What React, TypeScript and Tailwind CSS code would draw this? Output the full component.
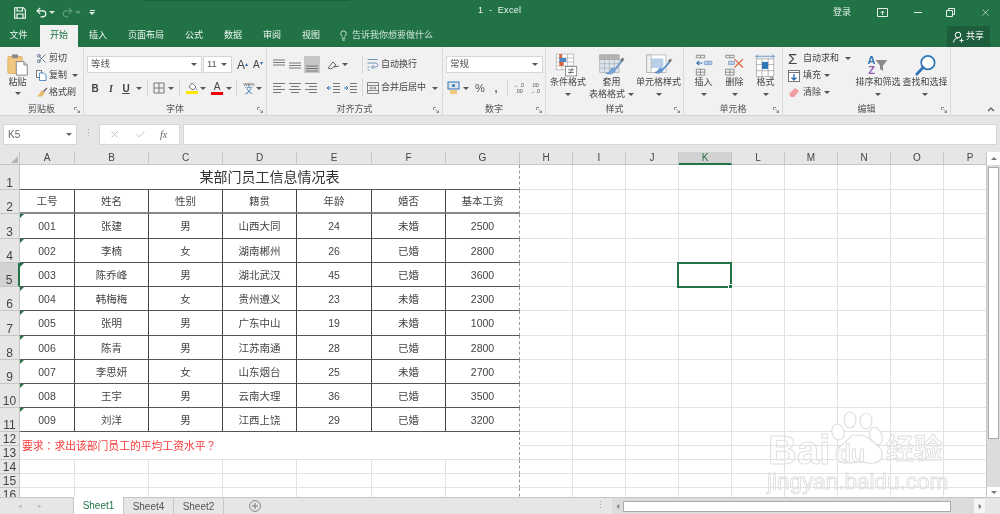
import React from "react";
import { Undo2, Redo2, Scissors, Lightbulb, X, Check } from "lucide-react";

const Caret = ({ c = "#555", className = "" }: { c?: string; className?: string }) => (
  <svg width="6" height="3" viewBox="0 0 6 3" className={"shrink-0 " + className}><path d="M0 0h6L3 3z" fill={c} /></svg>
);
const Launcher = () => (
  <svg width="6" height="6" viewBox="0 0 6 6" className="shrink-0"><path d="M.5 3V.5H3M2.500 2.500l3 3M5.500 3.500v2h-2" fill="none" stroke="#777" strokeWidth=".8" /></svg>
);
const Sep = ({ h = "h-[16px]" }: { h?: string }) => <div className={"w-px bg-[#d4d4d4] shrink-0 " + h} />;

const Group = ({ w, label, children, last }: { w: string; label: string; children: React.ReactNode; last?: boolean }) => (
  <div className={"flex flex-col shrink-0 h-[68px] " + w + (last ? "" : " border-r border-[#dadada]")}>
    <div className="h-[56px] flex">{children}</div>
    <div className="h-[12px] flex items-center relative">
      <span className="flex-1 text-center text-[9px] leading-[12px] text-[#555]">{label}</span>
      <div className="absolute right-[3px] top-[4px]"><Launcher /></div>
    </div>
  </div>
);

const Lines = ({ kind }: { kind: "top" | "mid" | "bot" | "l" | "c" | "r" | "in" | "out" }) => {
  const ys: Record<string, number[]> = { top: [2, 4.5, 7], mid: [5, 7.5, 10], bot: [8, 10.5, 13] };
  if (ys[kind]) return (
    <svg width="14" height="14" viewBox="0 0 14 14" className="shrink-0">
      {ys[kind].map((y) => <path key={y} d={`M1 ${y}h12`} stroke="#777" strokeWidth="1" />)}
    </svg>
  );
  const d: Record<string, string> = {
    l: "M1 2.500h12M1 5.500h8M1 8.500h12M1 11.500h8",
    c: "M1 2.500h12M3 5.500h8M1 8.500h12M3 11.500h8",
    r: "M1 2.500h12M5 5.500h8M1 8.500h12M5 11.500h8",
    in: "M7 2.500h7M7 5.500h7M7 8.500h7M7 11.500h7",
    out: "M7 2.500h7M7 5.500h7M7 8.500h7M7 11.500h7",
  };
  return (
    <svg width="14" height="14" viewBox="0 0 14 14" className="shrink-0">
      <path d={d[kind]} stroke="#777" strokeWidth="1" />
      {kind === "in" && <path d="M5 7H1M3 5L1 7l2 2" stroke="#2f75b5" strokeWidth="1" fill="none" />}
      {kind === "out" && <path d="M1 7h4M3 5l2 2-2 2" stroke="#2f75b5" strokeWidth="1" fill="none" />}
    </svg>
  );
};

const PasteIcon = () => (
  <svg width="22" height="24" viewBox="0 0 26 28">
    <rect x="1" y="4" width="17" height="20" rx="1" fill="#f0c77e" stroke="#d9ad62" />
    <rect x="6" y="1.500" width="7" height="4.500" fill="#8a8a8a" />
    <path d="M11 10h9l4 4v12H11z" fill="#fff" stroke="#777" />
    <path d="M20 10v4h4" fill="none" stroke="#777" />
  </svg>
);
const CopyIcon = () => (
  <svg width="11" height="11" viewBox="0 0 11 11"><path d="M.5.5h5v7h-5z" fill="#fff" stroke="#777" /><path d="M3.500 3h4l2.500 2v5.500h-6.500z" fill="#fff" stroke="#2f75b5" strokeWidth=".8" /></svg>
);
const BrushIcon = () => (
  <svg width="12" height="11" viewBox="0 0 12 11"><path d="M6 3l3 3-3 3.500H1C3 8 3.500 6 6 3z" fill="#e7b96b" /><path d="M7 4L10.500.5l1 1L8 5z" fill="#666" /></svg>
);

const BigGridIcon = ({ kind }: { kind: 0 | 1 | 2 }) => (
  <svg width="28" height="24" viewBox="0 0 32 27">
    <g stroke="#aaa" strokeWidth=".8" fill="#fff">
      {kind === 0 ? (
        <>
          <rect x="2.500" y="1" width="20" height="18" />
          <path d="M9 1v18M15.500 1v18M2.500 5.500h20M2.500 10h20M2.500 14.500h20" fill="none" />
          <rect x="6" y="1" width="3" height="4.500" fill="#d9633c" stroke="none" />
          <rect x="6" y="5.500" width="8" height="4.500" fill="#4a86c5" stroke="none" />
          <rect x="6" y="10" width="5" height="4.500" fill="#d9633c" stroke="none" />
          <rect x="13" y="15" width="13" height="11" fill="#fff" stroke="#666" />
          <path d="M16 19h7M16 22h7M21 17l-3 7" stroke="#444" fill="none" />
        </>
      ) : kind === 1 ? (
        <>
          <rect x="2" y="2" width="22" height="20" fill="#dce6f1" />
          <rect x="2" y="2" width="22" height="5" fill="#b3b3b3" />
          <path d="M7.500 2v20M13 2v20M18.500 2v20M2 7h22M2 12h22M2 17h22" fill="none" />
          <path d="M28 7l-9 11-3-1c-2 2-2 5-7 6 5 2 10 0 11-4l9-11z" fill="#7aa7d6" stroke="#5b8ac0" />
          <path d="M25 8l3-3 2 2-3 3z" fill="#777" stroke="none" />
        </>
      ) : (
        <>
          <rect x="2" y="2" width="22" height="20" />
          <rect x="7" y="6" width="14" height="11" fill="#b8cfe8" stroke="none" />
          <rect x="2" y="2" width="5" height="20" fill="#f0f0f0" />
          <path d="M28 9l-8 9-3-1c-2 2-2 4-6 5 5 2 9 0 10-3l8-9z" fill="#5f96cf" stroke="#5b8ac0" />
          <path d="M26 9l3-3 2 2-3 3z" fill="#777" stroke="none" />
        </>
      )}
    </g>
  </svg>
);

const InsertIcon = () => (
  <svg width="19" height="22" viewBox="0 0 22 26" fill="none" stroke="#777" strokeWidth=".9">
    <path d="M2.500 1.500h10v3h-10zM7.500 1.500v3M2.500 18h10v7h-10zM7.500 18v7M2.500 21.500h10" />
    <path d="M12 8.500h9v4h-9zM16.500 8.500v4" fill="#b7cde6" stroke="#7a9cc6" />
    <path d="M10 10.500H3M6 8l-3 2.500L6 13" stroke="#2f75b5" strokeWidth="1.200" />
  </svg>
);
const DeleteIcon = () => (
  <svg width="21" height="22" viewBox="0 0 24 26" fill="none" stroke="#777" strokeWidth=".9">
    <path d="M1.500 1.500h10v3h-10zM6.500 1.500v3M1.500 18h10v7h-10zM6.500 18v7M1.500 21.500h10" />
    <path d="M5 8.500h7v4H5z" fill="#b7cde6" stroke="#7a9cc6" />
    <path d="M12 6l10 10M22 6L12 16" stroke="#e0623a" strokeWidth="1.400" />
  </svg>
);
const FormatIcon = () => (
  <svg width="21" height="24" viewBox="0 0 24 27" fill="none" stroke="#999" strokeWidth=".8">
    <path d="M1 3.500h21M3 1.500l-2 2 2 2M20 1.500l2 2-2 2" stroke="#2f75b5" />
    <rect x="1.500" y="6.500" width="20" height="20" fill="#fff" />
    <path d="M8 6.500v20M15 6.500v20M1.500 13h20M1.500 20h20" />
    <rect x="8" y="10" width="7" height="8" fill="#2f75b5" stroke="none" />
  </svg>
);

const Big = ({ w, icon, l1, l2, caret = true, inline }: { w: string; icon: React.ReactNode; l1: string; l2?: string; caret?: boolean; inline?: boolean }) => (
  <div className={"flex flex-col items-center shrink-0 " + w}>
    <div className="h-[24px] mt-[6px] flex items-center justify-center">{icon}</div>
    <span className="text-[9px] leading-[12px] mt-[-1px] text-[#444] whitespace-nowrap">{l1}</span>
    {l2 ? (
      <span className="text-[9px] leading-[12px] text-[#444] whitespace-nowrap flex items-center gap-[3px]">{l2}{inline && <Caret />}</span>
    ) : (
      <div className="h-[12px] flex items-center">{caret && <Caret />}</div>
    )}
  </div>
);

const Select = ({ w, text }: { w: string; text: string }) => (
  <div className={"h-[17px] bg-white border border-[#d6d6d6] flex items-center justify-between pl-[3px] pr-[4px] shrink-0 " + w}>
    <span className="text-[9.500px] text-[#555]">{text}</span>
    <Caret />
  </div>
);

const Ribbon = () => (
  <div className="h-[68px] bg-[#f1f1f1] flex">
    <Group w="w-[84px]" label="剪贴板">
      <div className="w-[35px] flex flex-col items-center pt-[6px] shrink-0">
        <PasteIcon />
        <span className="text-[9px] leading-[12px] mt-[-1px] text-[#444]">粘贴</span>
        <Caret className="mt-[4px]" />
      </div>
      <div className="flex flex-col pt-[3px]">
        {[
          [<Scissors key="s" size={11} color="#55708f" />, "剪切", false],
          [<CopyIcon key="c" />, "复制", true],
          [<BrushIcon key="b" />, "格式刷", false],
        ].map(([ic, t, car], i) => (
          <div key={i} className="h-[17px] flex items-center">
            <div className="w-[13px] flex justify-center">{ic as React.ReactNode}</div>
            <span className="ml-[1px] text-[9px] text-[#444] whitespace-nowrap">{t as string}</span>
            {car && <Caret className="ml-[5px]" />}
          </div>
        ))}
      </div>
    </Group>

    <Group w="w-[183px]" label="字体">
      <div className="flex flex-col pl-[3px] pt-[9px]">
        <div className="flex items-center">
          <Select w="w-[115px]" text="等线" />
          <Select w="w-[29px] ml-[1px]" text="11" />
          <span className="ml-[5px] text-[12px] leading-none text-[#444] w-[16px]">A<sup className="text-[#2f75b5] text-[6px]">▴</sup></span>
          <span className="text-[10px] leading-none text-[#444]">A<sup className="text-[#2f75b5] text-[6px]">▾</sup></span>
        </div>
        <div className="flex items-center h-[18px] mt-[6px]">
          <span className="w-[16px] text-[10px] font-bold text-[#444] text-center">B</span>
          <span className="w-[16px] text-[10px] italic font-['Liberation_Serif',serif] font-bold text-[#444] text-center">I</span>
          <span className="w-[14px] text-[10px] font-semibold underline text-[#444] text-center">U</span>
          <Caret className="ml-[3px] mr-[5px]" />
          <Sep />
          <svg width="12" height="12" viewBox="0 0 12 12" className="ml-[5px]"><path d="M1 1h10v10H1zM6 1v10M1 6h10" fill="none" stroke="#777" /></svg>
          <Caret className="ml-[3px] mr-[5px]" />
          <Sep />
          <div className="ml-[6px] flex flex-col items-center w-[12px]">
            <svg width="11" height="9" viewBox="0 0 11 9"><path d="M5 1l4 4-3 3-4-3z" fill="#fff" stroke="#777" /><path d="M9 6c1 1 1 2 .5 2.500-.5 0-1-1-.5-2.500z" fill="#6aa0d5" /></svg>
            <div className="w-[12px] h-[3px] bg-[#ffe600]" />
          </div>
          <Caret className="ml-[2px] mr-[4px]" />
          <div className="ml-[1px] flex flex-col items-center w-[12px]">
            <span className="text-[10px] leading-[9px] text-[#444]">A</span>
            <div className="w-[12px] h-[3px] bg-[#f00000] mt-[1px]" />
          </div>
          <Caret className="ml-[3px] mr-[4px]" />
          <Sep />
          <div className="ml-[6px] flex flex-col items-center w-[12px] leading-none">
            <span className="text-[6px] leading-[6px] text-[#555]">wén</span>
            <span className="text-[8px] leading-[8px] text-[#2f75b5]">文</span>
          </div>
          <Caret className="ml-[1px]" />
        </div>
      </div>
    </Group>

    <Group w="w-[176px]" label="对齐方式">
      <div className="flex flex-col pl-[5px] pt-[9px]">
        <div className="flex items-center h-[17px] gap-[2px]">
          <Lines kind="top" />
          <Lines kind="mid" />
          <div className="bg-[#c6c6c6] w-[16px] h-[17px] flex items-center justify-center"><Lines kind="bot" /></div>
          <svg width="13" height="12" viewBox="0 0 13 12" className="ml-[5px]"><path d="M1 9l5-6 3 3-5 4zM7 8l5-1" fill="none" stroke="#666" /></svg>
          <Caret />
          <div className="ml-[12px] mr-[3px]"><Sep h="h-[17px]" /></div>
          <svg width="12" height="12" viewBox="0 0 12 12" className="ml-[-1px]"><path d="M.5.5h10M.5 4h8c3 0 3 4 0 4H5M6.500 6L4.500 8l2 2M.5 8h2M.5 11h2" fill="none" stroke="#6b8fb8" /></svg>
          <span className="text-[9px] text-[#444] whitespace-nowrap">自动换行</span>
        </div>
        <div className="flex items-center h-[18px] mt-[6px] gap-[2px]">
          <Lines kind="l" />
          <Lines kind="c" />
          <Lines kind="r" />
          <div className="ml-[6px]"><Lines kind="in" /></div>
          <div className="ml-[1px]"><Lines kind="out" /></div>
          <div className="ml-[3px] mr-[3px]"><Sep h="h-[18px]" /></div>
          <svg width="12" height="12" viewBox="0 0 12 12" className="ml-[-1px]"><path d="M.5.5h11v11H.5zM.5 3.500h11M.5 8.500h11M3 6h6M3 6l1.500-1.200M3 6l1.500 1.200M9 6L7.500 4.800M9 6L7.500 7.200" fill="none" stroke="#6a6a6a" strokeWidth=".8" /></svg>
          <span className="text-[9px] text-[#444] whitespace-nowrap">合并后居中</span>
          <Caret className="ml-[4px]" />
        </div>
      </div>
    </Group>

    <Group w="w-[103px]" label="数字">
      <div className="flex flex-col pl-[3px] pt-[9px]">
        <Select w="w-[97px]" text="常规" />
        <div className="flex items-center h-[18px] mt-[6px]">
          <svg width="13" height="14" viewBox="0 0 13 14" className="ml-[1px]"><rect x="1" y="1" width="11" height="7" fill="#dce6f1" stroke="#2f75b5" /><circle cx="6.500" cy="4.500" r="1.500" fill="#2f75b5" /><rect x="3" y="9" width="7" height="4" fill="#f0c77e" /></svg>
          <Caret className="ml-[3px]" />
          <span className="ml-[6px] text-[11px] text-[#555] w-[15px]">%</span>
          <span className="text-[11px] font-bold text-[#555] w-[12px] text-center">,</span>
          <div className="mx-[5px]"><Sep /></div>
          <span className="w-[12px] text-[5.500px] leading-[6px] text-[#555] text-center whitespace-nowrap">←.0<br />.00</span>
          <span className="ml-[4px] w-[12px] text-[5.500px] leading-[6px] text-[#555] text-center whitespace-nowrap">.00<br />→.0</span>
        </div>
      </div>
    </Group>

    <Group w="w-[138px]" label="样式">
      <Big w="w-[44px]" icon={<BigGridIcon kind={0} />} l1="条件格式" />
      <Big w="w-[43px]" icon={<BigGridIcon kind={1} />} l1="套用" l2="表格格式" inline />
      <Big w="w-[51px]" icon={<BigGridIcon kind={2} />} l1="单元格样式" />
    </Group>

    <Group w="w-[99px]" label="单元格">
      <div className="w-[4px]" />
      <Big w="w-[31px]" icon={<InsertIcon />} l1="插入" />
      <Big w="w-[31px]" icon={<DeleteIcon />} l1="删除" />
      <Big w="w-[31px]" icon={<FormatIcon />} l1="格式" />
    </Group>

    <Group w="w-[168px]" label="编辑">
      <div className="flex flex-col pt-[3px] pl-[5px] w-[72px] shrink-0">
        <div className="h-[17px] flex items-center">
          <span className="w-[12px] text-[15px] leading-none text-[#444]">Σ</span>
          <span className="ml-[3px] text-[9px] text-[#444] whitespace-nowrap">自动求和</span>
          <Caret className="ml-[6px]" />
        </div>
        <div className="h-[17px] flex items-center">
          <svg width="12" height="12" viewBox="0 0 12 12"><rect x=".5" y=".5" width="11" height="11" fill="#fff" stroke="#777" /><path d="M.5 2.500h11" stroke="#777" /><path d="M6 4v6M3.500 7.500L6 10l2.500-2.500" fill="none" stroke="#2f75b5" strokeWidth="1.400" /></svg>
          <span className="ml-[3px] text-[9px] text-[#444] whitespace-nowrap">填充</span>
          <Caret className="ml-[3px]" />
        </div>
        <div className="h-[17px] flex items-center">
          <svg width="12" height="11" viewBox="0 0 12 11"><path d="M7 1l4 3-5 6H3L1 7z" fill="#f19aa4" /></svg>
          <span className="ml-[3px] text-[9px] text-[#444] whitespace-nowrap">清除</span>
          <Caret className="ml-[3px]" />
        </div>
      </div>
      <Big w="w-[46px]" icon={
        <div className="flex items-center h-[24px]">
          <div className="flex flex-col items-center leading-none">
            <span className="text-[11px] leading-[10px] font-bold text-[#2f75b5]">A</span>
            <span className="text-[11px] leading-[10px] font-bold text-[#8e5bb5]">Z</span>
          </div>
          <svg width="13" height="13" viewBox="0 0 13 13"><path d="M.5 1h12L8 6.500V12l-3-2V6.500z" fill="#8a8a8a" /></svg>
        </div>
      } l1="排序和筛选" />
      <Big w="w-[48px]" icon={
        <svg width="23" height="23" viewBox="0 0 24 24" fill="none"><circle cx="14.500" cy="9" r="7" stroke="#2f75b5" strokeWidth="1.800" fill="#fff" /><path d="M9.500 14L3 21" stroke="#2f75b5" strokeWidth="3" strokeLinecap="round" /></svg>
      } l1="查找和选择" />
    </Group>

    <div className="flex-1 flex justify-end items-end pr-[5px] pb-[3px]">
      <svg width="8" height="5" viewBox="0 0 8 5"><path d="M1 4l3-3 3 3" fill="none" stroke="#555" strokeWidth="1.200" /></svg>
    </div>
  </div>
);

const TitleBar = () => (
  <div className="h-[25px] flex items-center relative">
    <div className="absolute left-[145px] top-0 w-[205px] h-px bg-[#1b5f3a]" />
    <svg width="12" height="12" viewBox="0 0 12 12" className="ml-[14px]"><path d="M.7.7h8.600l2 2v8.600H.7zM3 .7v3.300h5.500V.7M3 11.300V7h6v4.300" fill="none" stroke="#fff" strokeWidth="1.100" /></svg>
    <Undo2 size={13} color="#fff" className="ml-[9px]" strokeWidth={2} />
    <Caret c="#d5e6dc" className="ml-[1px]" />
    <Redo2 size={13} color="#5f9a7c" className="ml-[6px]" strokeWidth={2} />
    <Caret c="#5f9a7c" className="ml-[1px]" />
    <div className="ml-[8px] flex flex-col items-center gap-[1px]">
      <div className="w-[5px] h-px bg-[#e0ece5]" />
      <Caret c="#e0ece5" />
    </div>
    <span className="absolute left-[478px] top-[4px] text-[9px] leading-[13px] tracking-[.3px] text-[#f0f6f2] whitespace-pre">1  -  Excel</span>
    <div className="ml-auto flex items-center">
      <span className="text-[9px] text-[#e3efe8] w-[30px]">登录</span>
      <svg width="11" height="9" viewBox="0 0 11 9" className="ml-[14px]"><path d="M.5.5h10v8H.5zM5.500 7V3M3.500 5l2-2 2 2" fill="none" stroke="#e8f1ec" /></svg>
      <div className="w-[8px] h-px bg-[#e8f1ec] ml-[26px]" />
      <svg width="9" height="9" viewBox="0 0 9 9" className="ml-[24px]"><path d="M.5 2.500h6v6h-6zM2.500 2.500v-2h6v6h-2" fill="none" stroke="#e8f1ec" /></svg>
      <X size={11} color="#e8f1ec" className="ml-[25px] mr-[9px]" strokeWidth={1.400} />
    </div>
  </div>
);

const tabs: [string, string][] = [["插入", "w-[40px]"], ["页面布局", "w-[56px]"], ["公式", "w-[40px]"], ["数据", "w-[38px]"], ["审阅", "w-[40px]"], ["视图", "w-[38px]"]];
const TabRow = () => (
  <div className="h-[22px] flex items-end">
    <span className="w-[43px] h-[22px] flex items-center justify-center text-[9px] text-[#eef5f1] ml-[-3px]">文件</span>
    <span className="w-[38px] h-[22px] flex items-center justify-center text-[9px] text-[#217346] bg-[#f1f1f1]">开始</span>
    {tabs.map(([t, w]) => (
      <span key={t} className={"h-[22px] flex items-center justify-center text-[9px] text-[#eef5f1] " + w}>{t}</span>
    ))}
    <Lightbulb size={11} color="#e3efe8" className="ml-[8px] mb-[6px]" />
    <span className="h-[22px] flex items-center text-[9px] text-[#c9e0d3] ml-[3px]">告诉我你想要做什么</span>
    <div className="ml-auto mr-[10px] w-[43px] h-[21px] bg-[#1d5d3b] flex items-center justify-center gap-[2px]">
      <svg width="11" height="12" viewBox="0 0 11 12"><circle cx="5" cy="4" r="2.800" fill="none" stroke="#fff" /><path d="M.7 11.500c0-3 2-4.500 4.300-4.500M8.500 7.500v4M6.500 9.500h4" fill="none" stroke="#fff" /></svg>
      <span className="text-[9px] text-white">共享</span>
    </div>
  </div>
);

const FormulaBar = () => (
  <div className="h-[22px] flex items-center">
    <div className="w-[74px] h-[21px] ml-[3px] bg-white border border-[#d6d6d6] flex items-center justify-between pl-[4px] pr-[4px] shrink-0">
      <span className="text-[10px] text-[#666]">K5</span><Caret c="#666" />
    </div>
    <div className="w-[22px] flex justify-center text-[9px] text-[#aaa] shrink-0">⋮</div>
    <div className="w-[81px] h-[21px] bg-white border border-[#d6d6d6] flex items-center shrink-0">
      <X size={11} color="#bdbdbd" className="ml-[9px]" />
      <Check size={11} color="#bdbdbd" className="ml-[15px]" />
      <span className="ml-[14px] text-[10px] italic text-[#666] font-['Liberation_Serif',serif]">fx</span>
    </div>
    <div className="flex-1 h-[21px] ml-[3px] mr-[3px] bg-white border border-[#d6d6d6]" />
  </div>
);

const cols = ["A", "B", "C", "D", "E", "F", "G", "H", "I", "J", "K", "L", "M", "N", "O", "P"];
const heads = ["工号", "姓名", "性别", "籍贯", "年龄", "婚否", "基本工资"];
const data = [
  ["001", "张建", "男", "山西大同", "24", "未婚", "2500"],
  ["002", "李楠", "女", "湖南郴州", "26", "已婚", "2800"],
  ["003", "陈乔峰", "男", "湖北武汉", "45", "已婚", "3600"],
  ["004", "韩梅梅", "女", "贵州遵义", "23", "未婚", "2300"],
  ["005", "张明", "男", "广东中山", "19", "未婚", "1000"],
  ["006", "陈青", "男", "江苏南通", "28", "已婚", "2800"],
  ["007", "李思妍", "女", "山东烟台", "25", "未婚", "2700"],
  ["008", "王宇", "男", "云南大理", "36", "已婚", "3500"],
  ["009", "刘洋", "男", "江西上饶", "29", "已婚", "3200"],
];
const RowHead = ({ n, active }: { n: number; active?: boolean }) => (
  <div className={"flex items-end justify-center text-[12px] leading-[11px] text-[#444] border-b border-[#c6c6c6] overflow-hidden " + (active ? "bg-[#d2d2d2] border-r-2 border-r-[#217346]" : "bg-[#e6e6e6] border-r border-r-[#c6c6c6]")}>{n}</div>
);
const Empties = () => (
  <>
    {cols.slice(7).map((c) => <div key={c} className="border-r border-b border-[#e2e2e2] bg-white" />)}
  </>
);
const Tri = () => <div className="absolute left-0 top-0 w-0 h-0 border-t-[4px] border-t-[#217346] border-r-[4px] border-r-transparent" />;
const dash = "border-r border-r-[#999] [border-right-style:dashed]";

const Sheet = () => (
  <div className="relative flex-1 overflow-hidden bg-white h-[345px]">
    <div className="grid w-[997px] grid-cols-[20px_55px_74px_74px_74px_75px_74px_74px_53px_53px_53px_53px_53px_53px_53px_53px_53px] grid-rows-[13px_25px_24px_25px_24px_24px_24px_25px_24px_24px_24px_24px_14px_14px_14px_14px_14px] text-[10.500px] text-[#444]">
      <div className="bg-[#e6e6e6] border-r border-b border-[#c6c6c6] flex items-end justify-end">
        <svg width="9" height="9" viewBox="0 0 9 9"><path d="M8 1v7H1z" fill="#b5b5b5" /></svg>
      </div>
      {cols.map((c) => (
        <div key={c} className={"flex items-center justify-center text-[10px] leading-[12px] border-r border-b " + (c === "K" ? "bg-[#d2d2d2] border-r-[#c6c6c6] border-b-2 border-b-[#217346] text-[#217346]" : "bg-[#e6e6e6] border-[#c6c6c6] text-[#444]")}>{c}</div>
      ))}

      <RowHead n={1} />
      <div className={"col-span-7 flex items-center justify-center pt-[1px] text-[14px] text-[#333] border-b border-b-[#555] bg-white " + dash}>某部门员工信息情况表</div>
      <Empties />

      <RowHead n={2} />
      {heads.map((h, i) => (
        <div key={h} className={"flex items-center justify-center pt-[2px] border-b-2 border-b-[#888] bg-white " + (i === 6 ? dash : "border-r border-r-[#444]")}>{h}</div>
      ))}
      <Empties />

      {data.map((row, r) => (
        <React.Fragment key={r}>
          <RowHead n={r + 3} active={r === 2} />
          {row.map((v, i) => (
            <div key={i} className={"relative flex items-center justify-center pt-[2px] border-b border-b-[#555] bg-white " + (i === 6 ? dash : "border-r border-r-[#444]")}>
              {i === 0 && <Tri />}
              {v}
            </div>
          ))}
          <Empties />
        </React.Fragment>
      ))}

      <RowHead n={12} />
      <div className={"col-span-7 row-span-2 flex items-center pl-[2px] pt-[1px] text-[10.800px] text-[#f93a3a] font-['Liberation_Sans','Noto_Sans_CJK_TC',sans-serif] border-b border-b-[#e2e2e2] bg-white " + dash}>要求：求出该部门员工的平均工资水平？</div>
      <Empties />
      <RowHead n={13} />
      <Empties />
      {[14, 15, 16].map((n) => (
        <React.Fragment key={n}>
          <RowHead n={n} />
          {cols.slice(0, 7).map((c, i) => (
            <div key={c} className={"bg-white border-b border-b-[#e2e2e2] " + (i === 6 ? dash : "border-r border-r-[#e2e2e2]")} />
          ))}
          <Empties />
        </React.Fragment>
      ))}
    </div>

    {/* selected cell */}
    <div className="absolute left-[677px] top-[110px] w-[55px] h-[26px] border-2 border-[#217346]">
      <div className="absolute right-[-3px] bottom-[-3px] w-[5px] h-[5px] bg-[#217346] border border-white" />
    </div>

    {/* watermark */}
    <div className="absolute left-[766px] top-[254px] w-[184px] h-[85px] pointer-events-none">
      <svg width="64" height="60" viewBox="0 0 64 60" className="absolute left-[64px] top-[5px]" fill="#fff" stroke="#e0e0e0" strokeWidth="1.200">
        <ellipse cx="8" cy="21" rx="6" ry="8" transform="rotate(-15 8 21)" />
        <ellipse cx="20" cy="9" rx="6" ry="8" />
        <ellipse cx="36" cy="10" rx="6" ry="8" />
        <ellipse cx="46" cy="25" rx="6" ry="9" transform="rotate(-20 46 25)" />
        <path d="M24 24c-4 0-6 6-11 9-6 4-8 9-7 13 1 5 6 7 12 6 5 0 8-1 12-1 5 0 8 2 14 1 6-1 9-5 8-11-1-5-7-8-11-12-5-4-7-5-17-5z" />
      </svg>
      <span className="absolute left-[2px] top-[26px] text-[40px] leading-[37px] font-bold text-transparent [-webkit-text-stroke:1px_#e0e0e0]">Bai</span>
      <span className="absolute left-[71px] top-[35px] text-[23px] leading-[26px] font-bold text-transparent [-webkit-text-stroke:1px_#e0e0e0]">du</span>
      <span className="absolute left-[120px] top-[29px] text-[28px] leading-[30px] font-bold text-transparent [-webkit-text-stroke:1px_#e0e0e0]">经验</span>
      <span className="absolute left-[1px] top-[64px] text-[22.500px] leading-[24px] text-transparent [-webkit-text-stroke:1px_#e0e0e0]">jingyan.baidu.com</span>
    </div>
  </div>
);

const VScroll = () => (
  <div className="w-[14px] h-[345px] bg-[#dcdcdc] flex flex-col items-center border-l border-[#c6c6c6] shrink-0">
    <div className="w-[13px] h-[13px] bg-white flex items-center justify-center"><Caret c="#777" className="rotate-180" /></div>
    <div className="w-[11px] h-[272px] bg-white border border-[#ababab] mt-[2px]" />
    <div className="mt-auto w-[13px] h-[10px] bg-white flex items-center justify-center"><Caret c="#777" /></div>
  </div>
);

const Bottom = () => (
  <div className="h-[17px] bg-[#e6e6e6] flex items-start border-t border-[#c6c6c6] text-[10px]">
    <div className="w-[73px] flex items-center h-[16px] text-[#bbb] shrink-0">
      <span className="ml-[18px] text-[7px]">◂</span><span className="ml-[16px] text-[7px]">▸</span>
    </div>
    <div className="w-[51px] h-[17px] mt-[-1px] bg-white border-x border-[#c6c6c6] flex items-center justify-center text-[#217346]">Sheet1</div>
    <div className="w-[50px] h-[16px] border-r border-[#c6c6c6] flex items-center justify-center text-[#555]">Sheet4</div>
    <div className="w-[50px] h-[16px] border-r border-[#c6c6c6] flex items-center justify-center text-[#555]">Sheet2</div>
    <svg width="12" height="12" viewBox="0 0 12 12" className="ml-[25px] mt-[2px]"><circle cx="6" cy="6" r="5.400" fill="none" stroke="#888" /><path d="M6 3v6M3 6h6" stroke="#777" /></svg>
    <span className="ml-[335px] h-[16px] flex items-center text-[#aaa] text-[9px]">⋮</span>
    <div className="flex-1 h-[16px] mr-[15px] flex items-center bg-[#dcdcdc] ml-[7px]">
      <div className="w-[11px] flex justify-center"><Caret c="#888" className="rotate-90" /></div>
      <div className="w-[328px] h-[11px] bg-white border border-[#ababab]" />
      <div className="ml-auto w-[11px] h-[14px] bg-[#f5f5f5] flex items-center justify-center"><Caret c="#777" className="-rotate-90" /></div>
    </div>
  </div>
);

export default function App() {
  return (
    <div className="w-[1000px] h-[514px] overflow-hidden bg-[#e6e6e6] font-['Liberation_Sans','Noto_Sans_CJK_SC',sans-serif] blur-[0.4px]">
      <div className="bg-[#217346]">
        <TitleBar />
        <TabRow />
      </div>
      <Ribbon />
      <div className="h-[8px] border-t border-[#d4d4d4]" />
      <FormulaBar />
      <div className="h-[7px]" />
      <div className="flex">
        <Sheet />
        <VScroll />
      </div>
      <Bottom />
    </div>
  );
}
